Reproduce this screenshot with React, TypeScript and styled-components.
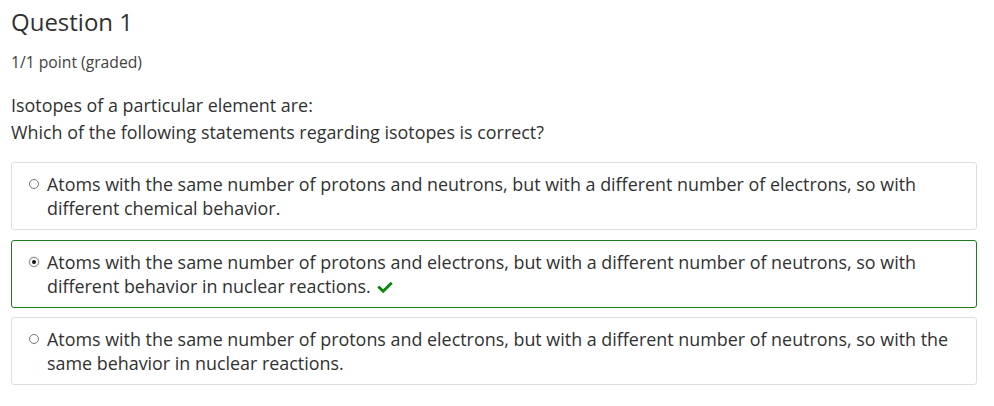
import React from 'react';
import styled, { createGlobalStyle } from 'styled-components';
import { FaCheck } from 'react-icons/fa';

const GlobalStyle = createGlobalStyle`
  body {
    margin: 0;
    background: #fff;
    font-family: "Open Sans", "Liberation Sans", sans-serif;
    color: #313131;
  }
`;

interface Choice {
  id: string;
  text: string;
  checked?: boolean;
}

const choices: Choice[] = [
  {
    id: 'c1',
    text: 'Atoms with the same number of protons and neutrons, but with a different number of electrons, so with different chemical behavior.'
  },
  {
    id: 'c2',
    text: 'Atoms with the same number of protons and electrons, but with a different number of neutrons, so with different behavior in nuclear reactions.',
    checked: true
  },
  {
    id: 'c3',
    text: 'Atoms with the same number of protons and electrons, but with a different number of neutrons, so with the same behavior in nuclear reactions.'
  }
];

const Page = styled.div`
  padding: 6px 17px 0 11px;
`;

const Title = styled.h3`
  margin: 0;
  font-size: 24px;
  font-weight: 400;
  line-height: 32px;
  color: #313131;
`;

const Points = styled.div`
  margin-top: 14px;
  font-size: 15.7px;
  line-height: 20px;
  color: #414141;
`;

const Prompt = styled.p`
  margin: 20px 0 0;
  font-size: 17.9px;
  line-height: 27px;
`;

const ChoiceList = styled.div`
  display: flex;
  flex-direction: column;
  gap: 9.5px;
  margin-top: 16px;
`;

const ChoiceBox = styled.label<{ correct?: boolean }>`
  display: flex;
  align-items: flex-start;
  padding: 9px 16px 9px 16px;
  border: 1px solid ${({ correct }) => (correct ? '#1f7a1f' : '#dedede')};
  border-radius: 3px;
  font-size: 17.9px;
  line-height: 24px;
  cursor: pointer;
`;

const Radio = styled.span<{ checked?: boolean }>`
  position: relative;
  flex: none;
  box-sizing: border-box;
  width: 10px;
  height: 10px;
  margin: 7px 8px 0 1px;
  border: 1px solid ${({ checked }) => (checked ? '#8a8a8a' : '#777')};
  border-radius: 50%;
  background: #fff;
  box-shadow: ${({ checked }) => (checked ? '0 0 0 1px #e4e4e4' : 'none')};

  &::after {
    content: '';
    display: ${({ checked }) => (checked ? 'block' : 'none')};
    position: absolute;
    top: 2px;
    left: 2px;
    width: 4px;
    height: 4px;
    border-radius: 50%;
    background: #111;
  }
`;

const Check = styled(FaCheck)`
  color: #0b860b;
  width: 18px;
  height: 15px;
  margin-left: 5px;
  vertical-align: -2px;
`;

export default function App() {
  return (
    <Page>
      <GlobalStyle />
      <Title>Question 1</Title>
      <Points>1/1 point (graded)</Points>
      <Prompt>
        Isotopes of a particular element are:
        <br />
        Which of the following statements regarding isotopes is correct?
      </Prompt>
      <ChoiceList>
        {choices.map((c) => (
          <ChoiceBox key={c.id} correct={c.checked}>
            <Radio checked={c.checked} />
            <span>
              {c.text}
              {c.checked && <Check />}
            </span>
          </ChoiceBox>
        ))}
      </ChoiceList>
    </Page>
  );
}
